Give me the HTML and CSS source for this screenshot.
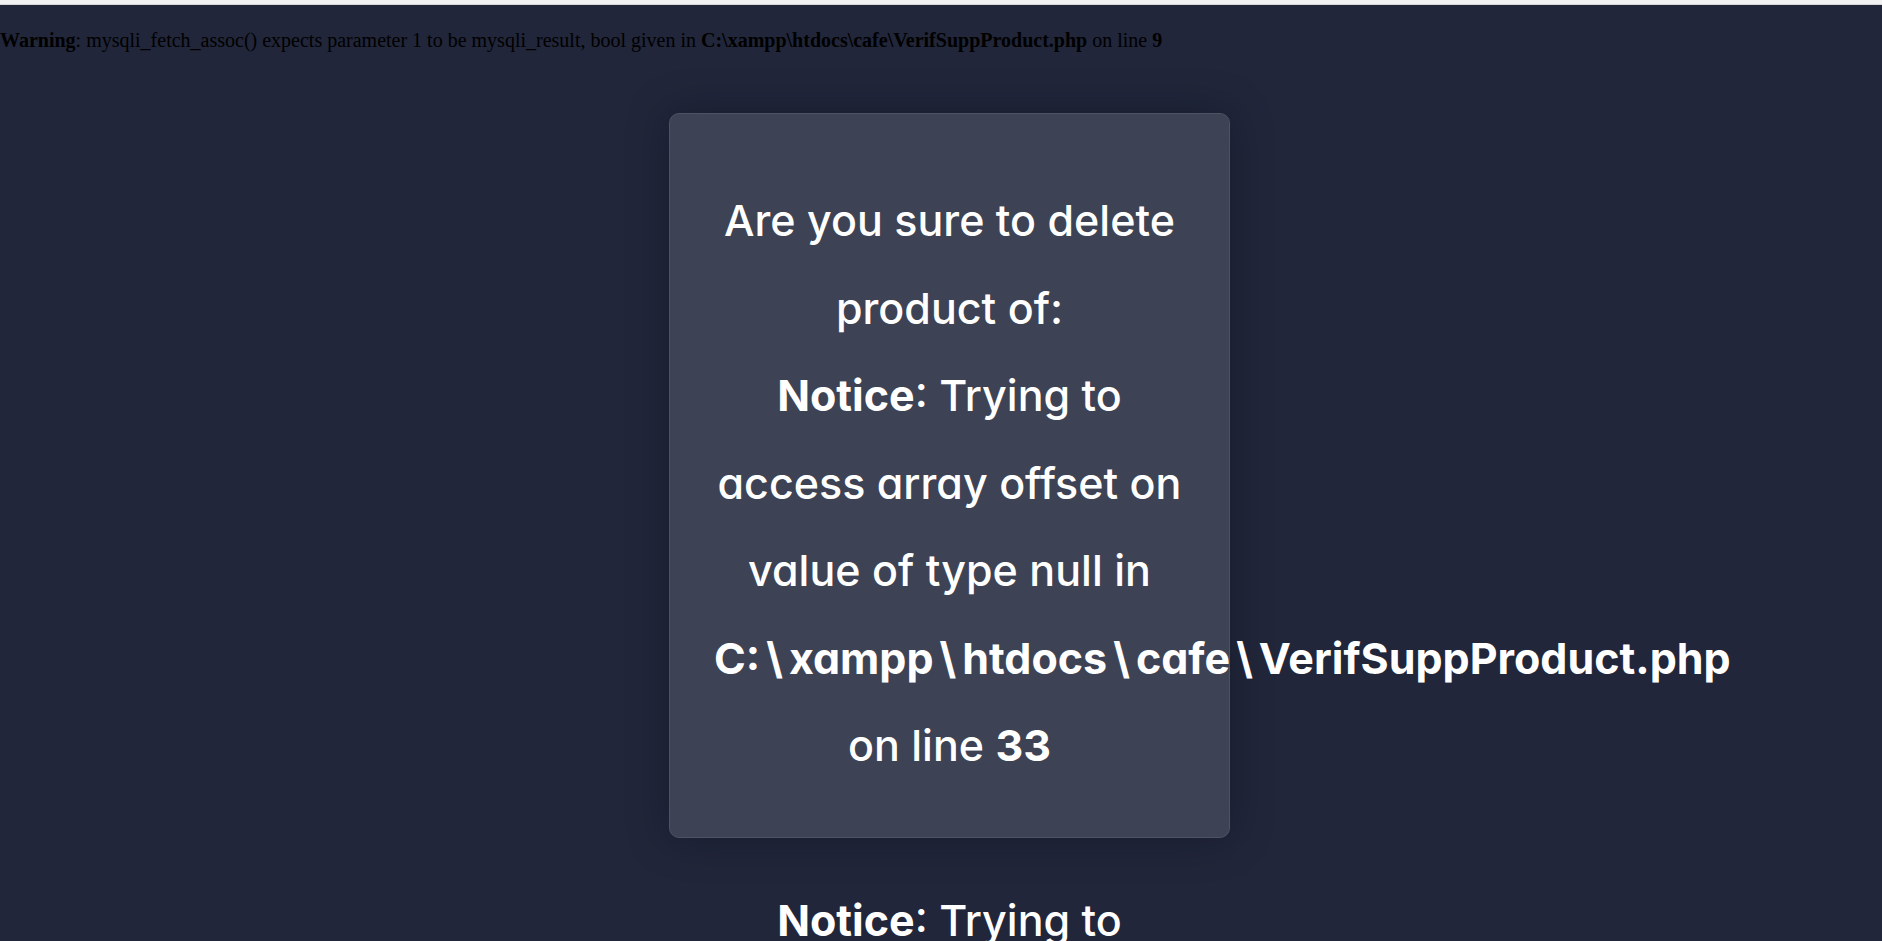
FILE: index.html
```html
<!DOCTYPE html>
<html lang="en">
<head>
<meta charset="utf-8">
<title>Supprimer produit</title>
<link rel="stylesheet" href="styles.css">
</head>
<body>
<div class="topstrip"></div>
<div class="php-out"><br><b>Warning</b>: mysqli_fetch_assoc() expects parameter 1 to be mysqli_result, bool given in <b>C:\xampp\htdocs\cafe\VerifSuppProduct.php</b> on line <b>9</b><br></div>
<div class="stage">
  <div class="modal">
    <p class="msg">Are you sure to delete<br>product of:<br><b>Notice</b>: Trying to<br>access array offset on<br>value of type null in<br><b>C:<span class="sep">\</span>xampp<span class="sep">\</span>htdocs<span class="sep">\</span>cafe<span class="sep">\</span>VerifSuppProduct.php</b><br>on line <b>33</b><br><br><b>Notice</b>: Trying to<br>access array offset on<br>value of type null in</p>
  </div>
</div>
</body>
</html>
```
FILE: styles.css
```css
html, body {
  margin: 0;
  padding: 0;
  height: 100%;
  overflow: hidden;
}
body {
  background: #21263a;
  font-family: "Liberation Serif", "Times New Roman", serif;
}
.topstrip {
  height: 4px;
  background: #f1f1f1;
  border-bottom: 1px solid #d6d6d6;
}
.php-out {
  font-size: 20px;
  line-height: 23px;
  padding-top: 1px;
  color: #000;
  white-space: nowrap;
}
.stage {
  display: flex;
  justify-content: center;
  padding-left: 17px;
  padding-top: 61px;
}
.modal {
  box-sizing: border-box;
  width: 561px;
  height: 725px;
  background: #3d4354;
  border: 1px solid #4c5365;
  border-radius: 10px;
  box-shadow: 0 0 40px rgba(10, 12, 22, 0.35);
  padding: 63px 44px 0;
}
.msg {
  margin: 0;
  font-family: Inter, "Open Sans", sans-serif;
  font-feature-settings: "cv11" 1;
  font-weight: 500;
  font-size: 43px;
  line-height: 87.5px;
  color: #fff;
  text-align: center;
  white-space: nowrap;
}
.msg b {
  font-weight: 650;
}
.sep {
  margin: 0 6px;
}
```
